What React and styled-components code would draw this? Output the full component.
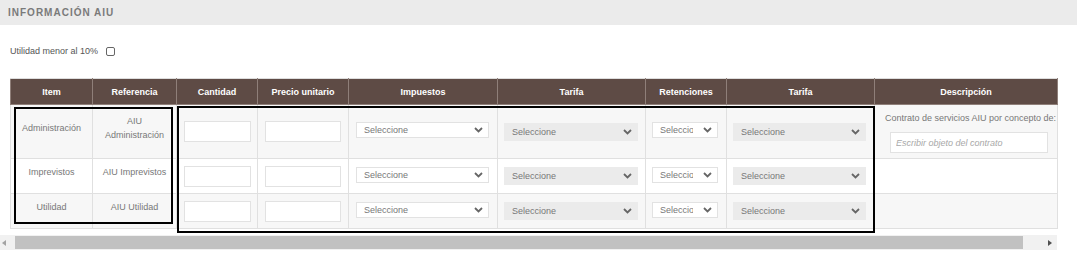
import styled, { createGlobalStyle } from "styled-components";

const GlobalStyle = createGlobalStyle`
  body {
    margin: 0;
    background: #ffffff;
    font-family: "Liberation Sans", Arial, sans-serif;
  }
`;

// Band
const Band = styled.div`
  height: 25px;
  display: flex;
  align-items: center;
  padding-left: 8px;
  background: #ebebeb;
  color: #7a7a7a;
  font-size: 10px;
  font-weight: bold;
  letter-spacing: 1px;
`;

// OptionRow
const OptionRow = styled.label`
  display: flex;
  align-items: center;
  gap: 8px;
  height: 10px;
  margin: 21px 0 0 10px;
  font-size: 9px;
  color: #555555;
`;

const Check = styled.input`
  appearance: none;
  width: 9px;
  height: 9px;
  margin: 1px 0 0 0;
  border: 1px solid #666666;
  border-radius: 2px;
  background: #ffffff;
`;

// ScrollArea
const ScrollArea = styled.div`
  position: relative;
  width: 1057px;
  margin-top: 22px;
`;

const TableWrap = styled.div`
  padding-left: 10px;
`;

const Table = styled.table`
  width: 1047px;
  table-layout: fixed;
  border-collapse: collapse;
  font-size: 9px;
`;

const Th = styled.th`
  height: 25px;
  padding: 0 4px;
  background: #5e4b45;
  color: #ffffff;
  font-weight: bold;
  text-align: center;
  border: 1px solid #8f7f79;
  border-top-color: #dddddd;
`;

const Row = styled.tr`
  background: ${(p) => (p.$odd ? "#f7f7f7" : "#ffffff")};
`;

const Td = styled.td`
  height: ${(p) => p.$h}px;
  padding: 0 ${(p) => p.$pr ?? 7}px 0 ${(p) => p.$pl ?? 7}px;
  border: 1px solid #e0e0e0;
  vertical-align: middle;
  box-sizing: border-box;
`;

const TextCell = styled(Td)`
  padding: 0 6px 8px;
  text-align: center;
  color: #777777;
  line-height: 14px;
`;

const DescCell = styled(Td)`
  padding: 8px 2px 0 10px;
  vertical-align: top;
  color: #777777;
  line-height: 11px;
`;

const DescText = styled.div`
  white-space: nowrap;
`;

const TextInput = styled.input`
  display: block;
  width: 100%;
  height: 21px;
  box-sizing: border-box;
  border: 1px solid #e2e2e2;
  background: #ffffff;
  margin: 0;
  padding: 0 5px;
  font-family: inherit;
  font-size: 9px;

  &::placeholder {
    color: #a8a8a8;
    font-style: italic;
  }
`;

const DescInput = styled(TextInput)`
  width: 158px;
  margin: 8px 0 0 5px;
`;

// Select
const SelectBox = styled.div`
  display: flex;
  align-items: center;
  height: ${(p) => (p.$disabled ? 18 : 16)}px;
  box-sizing: border-box;
  padding: 0 5px 0 7px;
  margin-bottom: ${(p) => (p.$disabled ? 0 : 3)}px;
  background: ${(p) => (p.$disabled ? "#ebebeb" : "#ffffff")};
  border: 1px solid ${(p) => (p.$disabled ? "#ebebeb" : "#e2e2e2")};
  color: #777777;
  font-size: 9px;
`;

const SelectLabel = styled.span`
  flex: 1;
  overflow: hidden;
  white-space: nowrap;
  margin-right: 10px;
`;

const Chevron = () => (
  <svg width="9" height="6" viewBox="0 0 9 6">
    <path d="M1 1 L4.5 4.5 L8 1" fill="none" stroke="#666666" strokeWidth="1.8" />
  </svg>
);

const Select = ({ disabled }) => (
  <SelectBox $disabled={disabled}>
    <SelectLabel>Seleccione</SelectLabel>
    <Chevron />
  </SelectBox>
);

// Frame (annotation overlay)
const Frame = styled.div`
  position: absolute;
  left: ${(p) => p.$x}px;
  top: ${(p) => p.$y}px;
  width: ${(p) => p.$w}px;
  height: ${(p) => p.$h}px;
  box-sizing: border-box;
  border: 2px solid #000000;
  pointer-events: none;
`;

// Scrollbar
const Scrollbar = styled.div`
  display: flex;
  align-items: center;
  height: 15px;
  margin-top: 6px;
  background: #f1f1f1;
`;

const Arrow = styled.div`
  width: 15px;
  height: 100%;
  display: flex;
  align-items: center;
  justify-content: ${(p) => (p.$right ? "center" : "flex-start")};
  padding-left: ${(p) => (p.$right ? 0 : 2)}px;
  box-sizing: border-box;

  &::before {
    content: "";
    border-top: 3.5px solid transparent;
    border-bottom: 3.5px solid transparent;
    ${(p) =>
      p.$right
        ? "border-left: 4px solid #505050;"
        : "border-right: 4px solid #a3a3a3;"}
  }
`;

const Thumb = styled.div`
  width: 1008px;
  height: 13px;
  background: #c1c1c1;
`;

const Spacer = styled.div`
  flex: 1;
`;

const columns = [
  ["Item", 82],
  ["Referencia", 84],
  ["Cantidad", 81],
  ["Precio unitario", 91],
  ["Impuestos", 149],
  ["Tarifa", 148],
  ["Retenciones", 81],
  ["Tarifa", 148],
  ["Descripción", 183],
];

const rows = [
  { item: "Administración", ref: "AIU Administración", h: 54 },
  { item: "Imprevistos", ref: "AIU Imprevistos", h: 35 },
  { item: "Utilidad", ref: "AIU Utilidad", h: 35 },
];

export default function App() {
  return (
    <>
      <GlobalStyle />
      <Band>INFORMACIÓN AIU</Band>
      <OptionRow>
        Utilidad menor al 10%
        <Check type="checkbox" />
      </OptionRow>

      <ScrollArea>
        <TableWrap>
          <Table>
            <colgroup>
              {columns.map(([, w], i) => (
                <col key={i} style={{ width: w }} />
              ))}
            </colgroup>
            <thead>
              <tr>
                {columns.map(([name], i) => (
                  <Th key={i}>{name}</Th>
                ))}
              </tr>
            </thead>
            <tbody>
              {rows.map((r, i) => (
                <Row key={r.item} $odd={i % 2 === 0}>
                  <TextCell $h={r.h}>{r.item}</TextCell>
                  <TextCell $h={r.h}>{r.ref}</TextCell>
                  <Td $h={r.h} $pr={6}>
                    <TextInput />
                  </Td>
                  <Td $h={r.h}>
                    <TextInput />
                  </Td>
                  <Td $h={r.h} $pr={8}>
                    <Select />
                  </Td>
                  <Td $h={r.h} $pl={6}>
                    <Select disabled />
                  </Td>
                  <Td $h={r.h} $pl={6} $pr={8}>
                    <Select />
                  </Td>
                  <Td $h={r.h} $pl={6} $pr={8}>
                    <Select disabled />
                  </Td>
                  {i === 0 ? (
                    <DescCell $h={r.h}>
                      <DescText>Contrato de servicios AIU por concepto de:</DescText>
                      <DescInput placeholder="Escribir objeto del contrato" />
                    </DescCell>
                  ) : (
                    <Td $h={r.h} />
                  )}
                </Row>
              ))}
            </tbody>
          </Table>
        </TableWrap>

        <Scrollbar>
          <Arrow />
          <Thumb />
          <Spacer />
          <Arrow $right />
        </Scrollbar>

        <Frame $x={14} $y={29} $w={159} $h={117} />
        <Frame $x={177} $y={28} $w={698} $h={127} />
      </ScrollArea>
    </>
  );
}
